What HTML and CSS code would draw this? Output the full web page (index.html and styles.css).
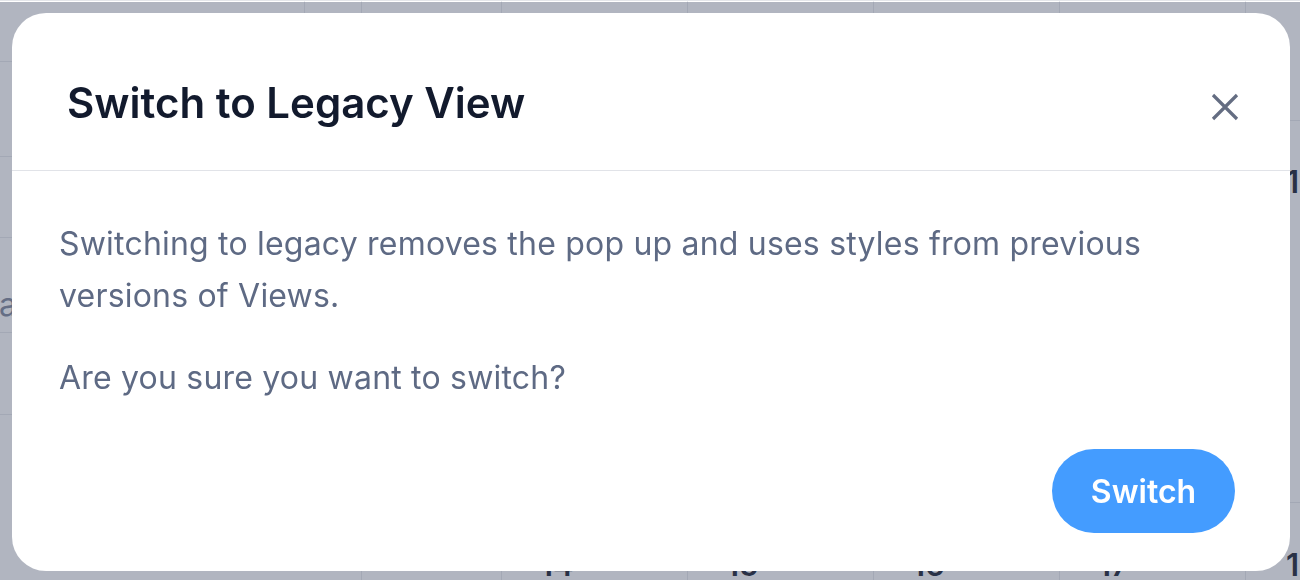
FILE: index.html
```html
<!DOCTYPE html>
<html lang="en">
<head>
<meta charset="utf-8">
<title>Switch to Legacy View</title>
<link rel="stylesheet" href="styles.css">
</head>
<body>
<div class="page">
  <aside class="sidebar">
    <div class="side-head"><div class="side-head-main"></div><div class="side-head-tail"></div></div>
    <div class="side-row r1"></div>
    <div class="side-row r2"></div>
    <div class="side-row r3"><span class="side-label">a</span></div>
    <div class="side-row r4"></div>
    <div class="side-row r5"></div>
  </aside>
  <main class="month">
    <div class="week week-top">
      <div class="cell narrow"></div><div class="cell"></div><div class="cell"></div><div class="cell"></div><div class="cell"></div><div class="cell last"></div>
    </div>
    <div class="week week-mid">
      <div class="cell narrow"></div><div class="cell"><span class="day">7</span></div><div class="cell"><span class="day">8</span></div><div class="cell"><span class="day">9</span></div><div class="cell"><span class="day">10</span></div><div class="cell last"><span class="day">11</span></div>
    </div>
    <div class="week week-bottom">
      <div class="cell narrow"></div><div class="cell"><span class="day">14</span></div><div class="cell"><span class="day">15</span></div><div class="cell"><span class="day">16</span></div><div class="cell"><span class="day">17</span></div><div class="cell last"><span class="day">18</span></div>
    </div>
  </main>
</div>

<div class="overlay">
  <div class="modal" role="dialog" aria-labelledby="modal-title">
    <header class="modal-header">
      <h2 class="modal-title" id="modal-title">Switch to Legacy View</h2>
      <button class="close-btn" aria-label="Close">
        <svg viewBox="0 0 28 28" width="28" height="28" aria-hidden="true">
          <path d="M2 2 L26 26 M26 2 L2 26" fill="none" stroke="currentColor" stroke-width="3.2" stroke-linecap="butt"/>
        </svg>
      </button>
    </header>
    <section class="modal-body">
      <p>Switching to legacy removes the pop up and uses styles from previous versions of Views.</p>
      <p class="question">Are you sure you want to switch?</p>
    </section>
    <footer class="modal-footer">
      <button class="switch-btn">Switch</button>
    </footer>
  </div>
</div>
</body>
</html>
```

FILE: styles.css
```css
* { box-sizing: border-box; }

html, body {
  margin: 0;
  padding: 0;
  width: 1300px;
  height: 580px;
  overflow: hidden;
  font-family: Inter, "Noto Sans", "Liberation Sans", sans-serif;
  background: #ffffff;
}

/* ---------- background calendar ---------- */
.page {
  display: flex;
  height: 580px;
  border-top: 1px solid #e4e6ea;
}

.sidebar {
  width: 362px;
  flex: none;
  display: flex;
  flex-direction: column;
  border-right: 1px solid #eaebef;
}

.side-head {
  height: 61px;
  display: flex;
  border-bottom: 1px solid #eaebef;
}
.side-head-main { width: 305px; border-right: 1px solid #eaebef; }
.side-head-tail { flex: 1; }

.side-row { border-bottom: 1px solid #eaebef; }
.r1 { height: 95px; }
.r2 { height: 81px; }
.r3 { height: 95px; padding-top: 47px; }
.r4 { height: 82px; }
.r5 { flex: 1; border-bottom: none; }

.side-label {
  display: block;
  margin-left: -1px;
  font-size: 32px;
  line-height: 40px;
  color: #8b93a5;
}

.month {
  flex: 1;
  display: flex;
  flex-direction: column;
}

.week {
  display: flex;
  border-bottom: 1px solid #eaebef;
}
.week-top { height: 124px; }
.week-mid { height: 393px; }
.week-bottom { flex: 1; border-bottom: none; }

.cell {
  width: 186px;
  flex: none;
  border-right: 1px solid #eaebef;
  padding: 46px 0 0 38px;
}
.week-bottom .cell { padding-top: 47px; }
.cell.narrow { width: 140px; }
.cell.last { flex: 1; width: auto; border-right: none; padding-left: 40px; }

.day {
  font-size: 31px;
  line-height: 30px;
  font-weight: 600;
  color: #2f3544;
}

/* ---------- overlay & modal ---------- */
.overlay {
  position: fixed;
  left: 0;
  top: 2px;
  right: 0;
  bottom: 0;
  background: rgba(32, 44, 75, 0.35);
  display: flex;
  padding: 11px 10px 9px 12px;
}

.modal {
  width: 1278px;
  height: 558px;
  background: #ffffff;
  border-radius: 34px;
  display: flex;
  flex-direction: column;
  overflow: hidden;
}

.modal-header {
  height: 158px;
  flex: none;
  display: flex;
  align-items: flex-start;
  justify-content: space-between;
  padding: 65px 51px 0 55px;
  border-bottom: 1px solid #e1e3e8;
}

.modal-title {
  margin: 0;
  font-size: 42px;
  line-height: 50px;
  font-weight: 600;
  color: #121a2d;
  letter-spacing: 0;
}

.close-btn {
  margin-top: 15px;
  width: 28px;
  height: 28px;
  padding: 0;
  border: none;
  background: none;
  color: #646d82;
  display: flex;
}

.modal-body {
  padding: 47px 100px 0 47px;
}

.modal-body p {
  margin: 0;
  font-size: 32px;
  line-height: 52px;
  letter-spacing: 0.2px;
  color: #5e6a84;
}

.modal-body .question { margin-top: 30px; }

.modal-footer {
  margin-top: auto;
  display: flex;
  justify-content: flex-end;
  padding: 0 55px 38px 0;
}

.switch-btn {
  width: 183px;
  height: 84px;
  border: none;
  border-radius: 42px;
  background: #449cff;
  color: #ffffff;
  font-family: Inter, "Noto Sans", "Liberation Sans", sans-serif;
  font-size: 32px;
  font-weight: 600;
  padding: 0;
}
```
